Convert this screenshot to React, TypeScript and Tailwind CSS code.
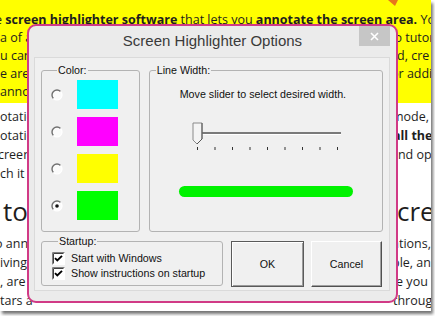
import React from "react"

type RowProps = {
	left?: React.ReactNode
	right?: React.ReactNode
}

// one line of the blog text behind the dialog; only the edges are visible
const Row: React.FC<RowProps> = ({ left, right }) => (
	<div className="flex h-[19px] whitespace-nowrap leading-[19px]">
		<div className="w-[397px] shrink-0 overflow-hidden">{left}</div>
		<div>{right}</div>
	</div>
)

const YRow: React.FC<RowProps> = ({ left, right }) => (
	<div className="flex h-[18px] whitespace-nowrap leading-[18px]">
		<div className="w-[397px] shrink-0 overflow-hidden">{left}</div>
		<div>{right}</div>
	</div>
)

const Radio: React.FC<{ checked?: boolean }> = ({ checked }) => (
	<svg width="12" height="12" viewBox="0 0 12 12" className="shrink-0">
		<circle cx="6" cy="6" r="5" fill="#fbfbfb" />
		<path d="M9.54 2.46 A5 5 0 0 0 2.46 9.54" fill="none" stroke="#707070" strokeWidth="1.4" />
		<path d="M2.46 9.54 A5 5 0 0 0 9.54 2.46" fill="none" stroke="#ffffff" strokeWidth="1.2" />
		{checked && <circle cx="6" cy="6" r="1.8" fill="#111" />}
	</svg>
)

const CheckBox: React.FC = () => (
	<svg width="13" height="13" viewBox="0 0 13 13" className="shrink-0">
		<rect x="0" y="0" width="13" height="13" fill="#fff" />
		<path d="M0.5 12.5 V0.5 H12.5" fill="none" stroke="#808080" />
		<path d="M1.5 11.5 V1.5 H11.5" fill="none" stroke="#404040" />
		<path d="M3 6.2 L5.3 8.5 L10 3.8" fill="none" stroke="#000" strokeWidth="1.9" />
	</svg>
)

const Slider: React.FC = () => {
	const ticks = [0, 1, 2, 3, 4, 5, 6, 7, 8]
	return (
		<svg width="160" height="30" viewBox="0 0 160 30">
			<line x1="8" y1="11" x2="150" y2="11" stroke="#7a7a7a" strokeWidth="2" />
			<line x1="8" y1="12.5" x2="150" y2="12.5" stroke="#ffffff" strokeWidth="1" />
			<path d="M2 1 H11 V17 L6 22 L2 18 Z" fill="#f4f4f4" stroke="#8a8a8a" strokeWidth="1" />
			<path d="M11 1 V17 L6 22" fill="none" stroke="#555" strokeWidth="1" />
			{ticks.map((i) => (
				<rect key={i} x={6 + i * 17.5} y="25" width="1" height="3" fill="#333" />
			))}
		</svg>
	)
}

const Swatches = ["bg-[#00ffff]", "bg-[#ff00ff]", "bg-[#ffff00]", "bg-[#00ff00]"]

const Dialog: React.FC = () => (
	<div className="absolute left-[27px] top-[24px] flex h-[279px] w-[371px] flex-col rounded-[9px] border-2 border-[#d13a86] bg-[#ebebeb] font-['Liberation_Sans',Arial,sans-serif] text-[10.7px] text-[#111]">
		{/* Title bar */}
		<div className="relative flex h-[31px] shrink-0 items-center justify-center">
			<span className="text-[15px] text-[#3a3a3a]">Screen Highlighter Options</span>
			<div className="absolute right-[6px] top-0 flex h-[20px] w-[31px] items-center justify-center bg-[#c6c6c6]">
				<svg width="9" height="9" viewBox="0 0 9 9">
					<path d="M1 1 L8 8 M8 1 L1 8" stroke="#fff" strokeWidth="1.6" />
				</svg>
			</div>
		</div>

		{/* Client area */}
		<div className="mb-[10px] ml-[5px] mr-[6px] flex flex-1 flex-col border border-[#dadada] bg-[#f0f0f0] px-[6px] pt-[6px]">
			<div className="flex gap-[9px]">
				<fieldset className="h-[168px] w-[99px] rounded-[3px] border border-[#b3b3b3] pl-[9px] pt-[3px]">
					<legend className="ml-[6px] px-[1px] leading-[13px]">Color:</legend>
					<div className="flex flex-col gap-[8px]">
						{Swatches.map((c, i) => (
							<div key={c} className="flex items-center gap-[14px]">
								<Radio checked={i === 3} />
								<div className={`h-[29px] w-[41px] ${c}`} />
							</div>
						))}
					</div>
				</fieldset>
				<fieldset className="h-[168px] w-[235px] rounded-[3px] border border-[#b3b3b3]">
					<legend className="ml-[6px] px-[1px] leading-[13px]">Line Width:</legend>
					<div className="mt-[11px] pl-[30px] leading-[13px]">Move slider to select desired width.</div>
					<div className="ml-[41px] mt-[21px]">
						<Slider />
					</div>
					<div className="ml-[29px] mt-[34px] h-[11px] w-[174px] rounded-full bg-[#00f200]" />
				</fieldset>
			</div>

			<div className="mt-[3px] flex items-start">
				<fieldset className="h-[51px] w-[182px] rounded-[3px] border border-[#b3b3b3] pl-[10px]">
					<legend className="ml-[6px] px-[1px] leading-[13px]">Startup:</legend>
					<div className="mt-[4px] flex flex-col gap-[2px]">
						<label className="flex items-center gap-[6px] leading-[13px]">
							<CheckBox />
							Start with Windows
						</label>
						<label className="flex items-center gap-[6px] leading-[13px]">
							<CheckBox />
							Show instructions on startup
						</label>
					</div>
				</fieldset>
				<div className="ml-[8px] mt-[6px] flex gap-[7px]">
					<button className="flex h-[46px] w-[73px] items-center justify-center border border-[#5a5a5a] bg-[#f0f0f0] shadow-[inset_1px_1px_0_#fff,inset_-1px_-1px_0_#9a9a9a]">
						OK
					</button>
					<button className="flex h-[46px] w-[71px] items-center justify-center border border-b-[#505050] border-l-white border-r-[#505050] border-t-white bg-[#f0f0f0] shadow-[inset_-1px_-1px_0_#a0a0a0]">
						Cancel
					</button>
				</div>
			</div>
		</div>
	</div>
)

export default function App() {
	return (
		<div className="h-[316px] w-[435px] bg-white">
			<div className="relative h-[311px] w-[431px] overflow-hidden bg-white font-['Open_Sans',sans-serif] text-[12.5px] text-[#1e1e1e] shadow-[2px_3px_3px_rgba(0,0,0,0.55)]">
				{/* Yellow highlighted paragraph */}
				<div className="h-[103px] bg-[#ffff00] pt-[11px]">
					<div className="h-[18px] whitespace-nowrap leading-[18px]">
						<span className="-ml-[5px]">e </span>
						<b>screen highlighter software</b> that lets you <b>annotate the screen area.</b> Yo
					</div>
					<YRow left="a of an" right={<span className="-ml-[7px]">to tutor</span>} />
					<YRow left="u can" right={<span className="-ml-[7px]">ed, cre</span>} />
					<YRow left="e are" right={<span className="-ml-[6px]">or addi</span>} />
					<YRow left="annotations" />
				</div>

				{/* Rest of the article */}
				<div className="pt-[4px]">
					<Row left="otations" right={<span className="-ml-[5px]">mode,</span>} />
					<Row left="otations" right={<b className="-ml-[4px]">all the</b>} />
					<Row left={<span className="-ml-[2px]">creen</span>} right={<span className="-ml-[6px]">and ope</span>} />
					<Row left="ch it" />
					<div className="flex h-[51px] whitespace-nowrap pt-[13px] text-[26px] leading-[30px]">
						<div className="w-[397px] shrink-0 overflow-hidden pl-[3px]">to</div>
						<div>crea</div>
					</div>
					<Row left={<span className="-ml-[5px]">o annotate</span>} right={<span className="-ml-[5px]">ations,</span>} />
					<Row left="iving" right={<span className="-ml-[5px]">ble, and</span>} />
					<Row left=", are" right={<span className="-ml-[6px]">re you</span>} />
					<Row left="tars a" right={<span className="-ml-[4px]">through</span>} />
					<Row left="highlighter" right="the" />
				</div>

				{/* tip of an orange arrow at the top */}
				<svg className="absolute left-[386px] top-0" width="14" height="7" viewBox="0 0 14 7">
					<path d="M2 0 L12 0 L9 6 Z" fill="#e8741c" />
				</svg>

				<Dialog />
			</div>
		</div>
	)
}
